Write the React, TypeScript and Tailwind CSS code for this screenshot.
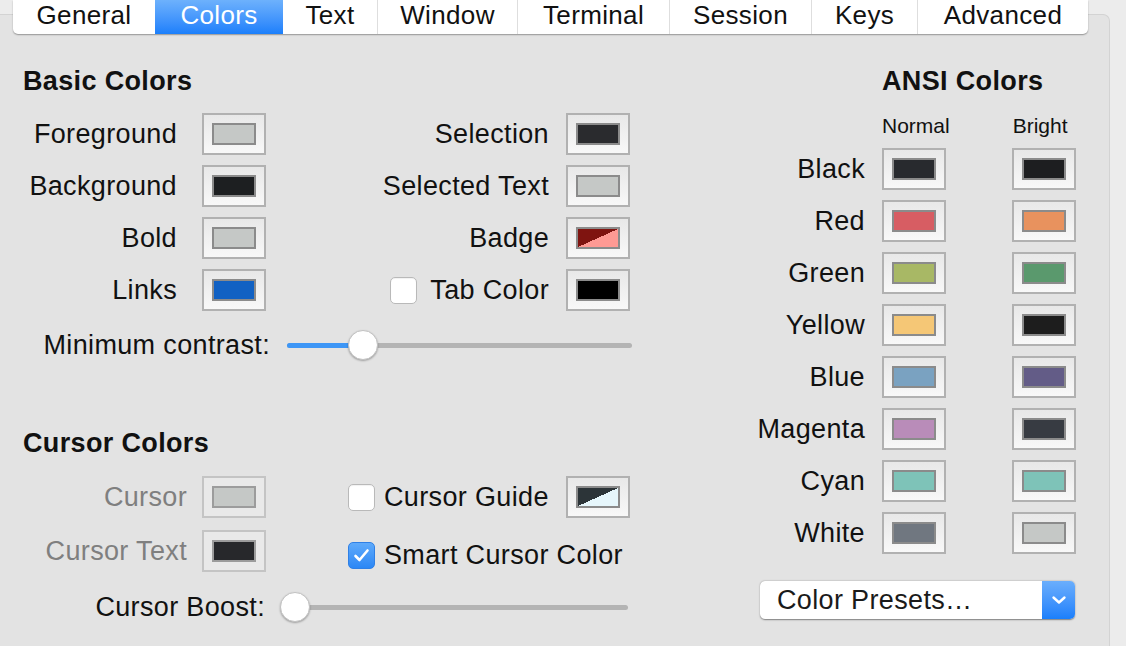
import React from "react";

type SwProps = { inner: string; disabled?: boolean };

function Swatch({ inner, disabled }: SwProps) {
  return (
    <div
      className={
        disabled
          ? "w-[64px] h-[42px] shrink-0 border-2 border-[#c4c4c4] bg-[#e9e9e9] flex items-center justify-center"
          : "w-[64px] h-[42px] shrink-0 border-2 border-[#b1b1b1] bg-linear-to-b from-[#e8e8e8] to-[#f8f8f8] flex items-center justify-center"
      }
    >
      <div
        className={
          (disabled ? "border-[#9c9c9c] " : "border-[#8b8b8b] ") +
          "w-[44px] h-[22px] border-2 " +
          inner
        }
      />
    </div>
  );
}

function Checkbox({ checked }: { checked?: boolean }) {
  if (checked) {
    return (
      <div className="w-[27px] h-[27px] shrink-0 rounded-[5px] bg-linear-to-b from-[#5eaafb] to-[#2b87f5] border border-[#2f80e6] flex items-center justify-center">
        <svg width="17" height="15" viewBox="0 0 17 15">
          <path d="M2.5 8 L6.5 12 L14.5 2.5" fill="none" stroke="white" strokeWidth="2.6" strokeLinecap="round" strokeLinejoin="round" />
        </svg>
      </div>
    );
  }
  return (
    <div className="w-[27px] h-[27px] shrink-0 rounded-[5px] bg-white border border-[#b9b9b9] shadow-[inset_0_1px_1px_rgba(0,0,0,0.06)]" />
  );
}

function Slider({ width, fill }: { width: string; fill: number }) {
  return (
    <div className={"relative h-[32px] flex items-center " + width}>
      <div className="w-full h-[5px] rounded-full bg-[#b4b4b4]" />
      <div className="absolute left-0 top-[13.5px] h-[5px] rounded-full bg-[#3d96f6]" style={{ width: fill }} />
      <div
        className="absolute top-[1px] w-[30px] h-[30px] rounded-full bg-white border border-[#c2c2c2] shadow-[0_1px_2px_rgba(0,0,0,0.3)]"
        style={{ left: Math.max(fill - 15, -2) }}
      />
    </div>
  );
}

const tabs = [
  { t: "General", w: "w-[142px]" },
  { t: "Colors", w: "w-[128px]", active: true },
  { t: "Text", w: "w-[95px]" },
  { t: "Window", w: "w-[140px]" },
  { t: "Terminal", w: "w-[152px]" },
  { t: "Session", w: "w-[142px]" },
  { t: "Keys", w: "w-[106px]" },
  { t: "Advanced", w: "w-[170px]" },
];

const basic = [
  { l: "Foreground", c: "bg-[#c5c8c6]", r: "Selection", rc: "bg-[#2a2b2e]" },
  { l: "Background", c: "bg-[#1d1f21]", r: "Selected Text", rc: "bg-[#c5c8c6]" },
  { l: "Bold", c: "bg-[#c5c8c6]", r: "Badge", rc: "bg-[linear-gradient(to_bottom_right,#7f1410_50%,#ff9a94_50%)]" },
  { l: "Links", c: "bg-[#1161c3]", r: "Tab Color", rc: "bg-[#000000]", check: true },
];

const ansi = [
  { l: "Black", n: "bg-[#282a2e]", b: "bg-[#1d1e20]" },
  { l: "Red", n: "bg-[#d75d63]", b: "bg-[#e8925e]" },
  { l: "Green", n: "bg-[#a8b865]", b: "bg-[#5a996d]" },
  { l: "Yellow", n: "bg-[#f5c776]", b: "bg-[#1d1d1d]" },
  { l: "Blue", n: "bg-[#7aa2c1]", b: "bg-[#635c87]" },
  { l: "Magenta", n: "bg-[#b98cb9]", b: "bg-[#373b42]" },
  { l: "Cyan", n: "bg-[#7ec3b8]", b: "bg-[#7ec3b8]" },
  { l: "White", n: "bg-[#707780]", b: "bg-[#c5c8c6]" },
];

export default function App() {
  return (
    <div className="w-[1126px] h-[646px] overflow-hidden bg-[#ececec] font-['Liberation_Sans',Arial,sans-serif] text-[27px] tracking-[0.35px] text-[#111] leading-none">
      {/* Tab bar */}
      <div className="relative z-10 ml-[13px] w-[1075px] h-[34px] flex bg-white rounded-b-[5px] shadow-[0_1px_1.5px_rgba(0,0,0,0.35)] overflow-hidden">
        {tabs.map((t, i) => (
          <div
            key={t.t}
            className={
              t.w +
              " h-full flex items-center justify-center pb-[4px] text-[26px] " +
              (t.active
                ? "bg-linear-to-b from-[#6db1fc] to-[#1a7ffb] text-white"
                : "text-[#111] ") +
              (i < tabs.length - 1 && !t.active && !tabs[i + 1].active ? " border-r border-[#dedede]" : "")
            }
          >
            {t.t}
          </div>
        ))}
      </div>

      {/* Panel */}
      <div className="-mt-[20px] w-[1110px] h-[660px] bg-[#e3e3e3] border-t border-r border-[#d3d3d3] rounded-tr-[7px] flex pt-[50px]">
        {/* Left block */}
        <div className="w-[640px] flex flex-col">
          <div className="pl-[23px] h-[32px] flex items-center font-bold">Basic Colors</div>
          <div className="mt-[11px] flex flex-col">
            {basic.map((r) => (
              <div key={r.l} className="h-[52px] flex items-center">
                <div className="w-[177px] text-right">{r.l}</div>
                <div className="ml-[25px]">
                  <Swatch inner={r.c} />
                </div>
                <div className="w-[283px] flex items-center justify-end">
                  {r.check && (
                    <div className="mr-[13px]">
                      <Checkbox />
                    </div>
                  )}
                  <span>{r.r}</span>
                </div>
                <div className="ml-[17px]">
                  <Swatch inner={r.rc} />
                </div>
              </div>
            ))}
          </div>
          <div className="h-[58px] flex items-center">
            <div className="w-[270px] text-right">Minimum contrast:</div>
            <div className="ml-[17px]">
              <Slider width="w-[345px]" fill={76} />
            </div>
          </div>

          <div className="mt-[53px] pl-[23px] h-[32px] flex items-center font-bold">Cursor Colors</div>
          <div className="mt-[11px] flex flex-col">
            <div className="h-[54px] flex items-center">
              <div className="w-[187px] text-right text-[#7f7f7f]">Cursor</div>
              <div className="ml-[15px]">
                <Swatch inner="bg-[#c5c8c6]" disabled />
              </div>
              <div className="w-[300px] pl-[82px] flex items-center">
                <Checkbox />
                <span className="ml-[9px]">Cursor Guide</span>
              </div>
              <Swatch inner="bg-[linear-gradient(to_bottom_right,#2c3438_50%,#e6f6fb_50%)]" />
            </div>
            <div className="h-[54px] flex items-center">
              <div className="w-[187px] text-right text-[#7f7f7f]">Cursor Text</div>
              <div className="ml-[15px]">
                <Swatch inner="bg-[#27282b]" disabled />
              </div>
              <div className="ml-[82px] flex items-center pt-[8px]">
                <Checkbox checked />
                <span className="ml-[9px]">Smart Cursor Color</span>
              </div>
            </div>
            <div className="h-[58px] flex items-center">
              <div className="w-[265px] text-right">Cursor Boost:</div>
              <div className="ml-[17px]">
                <Slider width="w-[346px]" fill={0} />
              </div>
            </div>
          </div>
        </div>

        {/* Right block */}
        <div className="ml-[100px] w-[350px] flex flex-col">
          <div className="pl-[142px] h-[32px] flex items-center font-bold">ANSI Colors</div>
          <div className="mt-[14px] h-[28px] flex items-center text-[21px] tracking-normal">
            <span className="ml-[142px]">Normal</span>
            <span className="ml-[63px]">Bright</span>
          </div>
          <div className="mt-[4px] flex flex-col">
            {ansi.map((a) => (
              <div key={a.l} className="h-[52px] flex items-center">
                <div className="w-[125px] text-right">{a.l}</div>
                <div className="ml-[17px]">
                  <Swatch inner={a.n} />
                </div>
                <div className="ml-[66px]">
                  <Swatch inner={a.b} />
                </div>
              </div>
            ))}
          </div>
          <div className="mt-[22px] ml-[20px] w-[315px] h-[38px] flex rounded-[5px] bg-white shadow-[0_0.5px_1.5px_rgba(0,0,0,0.45)] overflow-hidden">
            <div className="flex-1 flex items-center pl-[17px] text-[#1a1a1a]">Color Presets…</div>
            <div className="w-[33px] h-full bg-linear-to-b from-[#6aaefc] to-[#1a7ffb] flex items-center justify-center">
              <svg width="16" height="10" viewBox="0 0 16 10">
                <path d="M2.5 2.5 L8 7.5 L13.5 2.5" fill="none" stroke="white" strokeWidth="2.4" strokeLinecap="round" strokeLinejoin="round" />
              </svg>
            </div>
          </div>
        </div>
      </div>
    </div>
  );
}
